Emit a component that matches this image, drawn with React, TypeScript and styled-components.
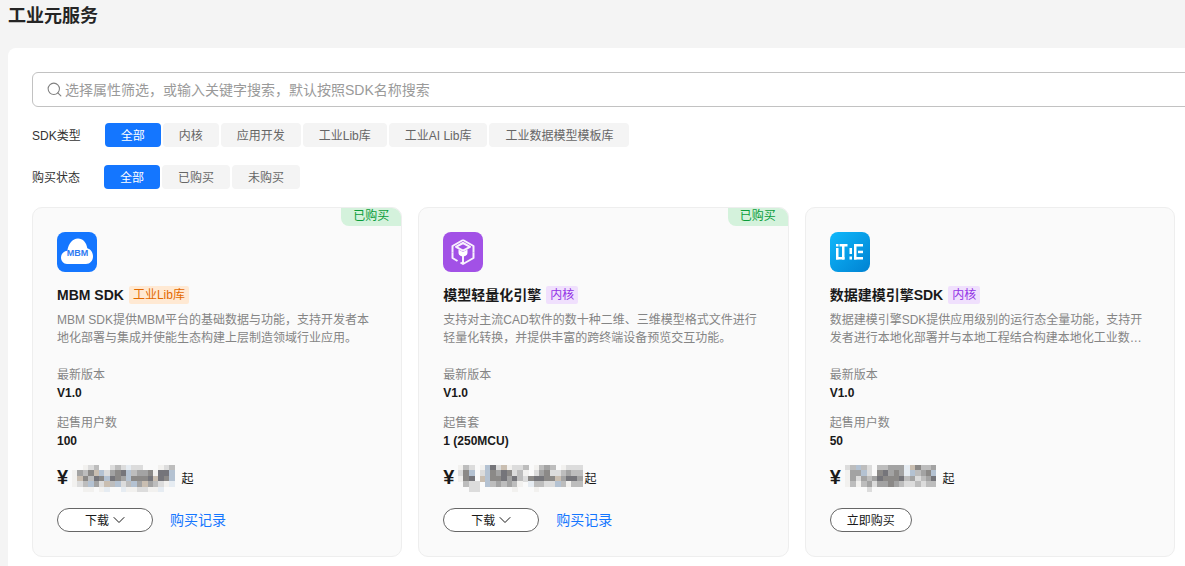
import { createGlobalStyle } from 'styled-components'
import styled from 'styled-components'
import { Search, ChevronDown } from 'lucide-react'

const GlobalStyle = createGlobalStyle`
  html, body {
    margin: 0;
    height: 100%;
    overflow: hidden;
    background: #f4f4f4;
  }
  body {
    font-family: "Liberation Sans", "Noto Sans CJK SC", sans-serif;
    font-size: 12px;
    color: #191919;
  }
`

const Page = styled.div`
  width: 1560px;
  padding: 0 8px;
`

const PageTitle = styled.h1`
  margin: 0;
  height: 48px;
  padding-top: 4px;
  box-sizing: border-box;
  font-size: 18px;
  line-height: 24px;
  font-weight: 700;
  color: #252525;
`

const Panel = styled.section`
  background: #fff;
  border-radius: 8px;
  padding: 24px;
  min-height: 600px;
`

const SearchBox = styled.div`
  display: flex;
  align-items: center;
  gap: 2px;
  height: 35px;
  box-sizing: border-box;
  padding: 0 13px;
  border: 1px solid #c2c2c2;
  border-radius: 6px;
  color: #808080;
`

const SearchInput = styled.input`
  flex: 1;
  border: 0;
  outline: 0;
  padding: 0;
  background: transparent;
  font: inherit;
  font-size: 14px;
  color: #191919;

  &::placeholder {
    color: #9a9a9a;
    opacity: 1;
  }
`

const FilterRow = styled.div`
  display: flex;
  align-items: center;
  margin-top: ${p => p.$top}px;
`

const FilterLabel = styled.span`
  margin-right: 24px;
  padding-top: 2px;
  font-size: 12px;
  line-height: 22px;
  color: #333;
`

const Tabs = styled.div`
  display: flex;
  gap: 2px;
`

const Tab = styled.button`
  height: 24px;
  padding: 0 16px 2px;
  border: 0;
  border-radius: 4px;
  font: inherit;
  font-size: 12px;
  white-space: nowrap;
  color: ${p => (p.$active ? '#fff' : '#666')};
  background: ${p => (p.$active ? '#1476ff' : '#f4f4f4')};
`

const CardGrid = styled.div`
  display: grid;
  grid-template-columns: repeat(3, 370.33px);
  gap: 16px;
  margin-top: 18px;
`

const Card = styled.article`
  position: relative;
  height: 350px;
  box-sizing: border-box;
  padding: 24px;
  background: #fafafa;
  border: 1px solid #eeeeee;
  border-radius: 10px;
  overflow: hidden;
`

const Ribbon = styled.span`
  position: absolute;
  top: -1px;
  right: 0;
  width: 60px;
  height: 19px;
  line-height: 19px;
  text-align: center;
  font-size: 12px;
  color: #0a9d3a;
  background: #d4f2dc;
  border-bottom-left-radius: 8px;
`

const LogoBox = styled.div`
  width: 40px;
  height: 40px;

  svg {
    display: block;
  }
`

const TitleRow = styled.div`
  display: flex;
  align-items: center;
  gap: 5px;
  height: 18px;
  margin-top: 14px;
`

const CardTitle = styled.h3`
  margin: 0;
  font-size: 14px;
  line-height: 18px;
  font-weight: 700;
  color: #191919;
`

const KindTag = styled.span`
  height: 18px;
  line-height: 18px;
  padding: 0 4px;
  border-radius: 2px;
  font-size: 12px;
  color: ${p => (p.$kind === 'lib' ? '#e36a00' : '#9333e6')};
  background: ${p => (p.$kind === 'lib' ? '#ffe9d3' : '#f0e0fd')};
`

const Desc = styled.p`
  margin: 7px 0 0;
  width: 320px;
  font-size: 12px;
  line-height: 18px;
  height: 36px;
  color: #858585;
  display: -webkit-box;
  -webkit-box-orient: vertical;
  -webkit-line-clamp: 2;
  overflow: hidden;
`

const MetaLabel = styled.div`
  margin-top: ${p => p.$top}px;
  font-size: 12px;
  line-height: 18px;
  color: #858585;
`

const MetaValue = styled.div`
  font-size: 12px;
  line-height: 18px;
  font-weight: 700;
  color: #191919;
`

const PriceRow = styled.div`
  display: flex;
  align-items: center;
  height: 26px;
  margin-top: 15px;
`

const Yen = styled.span`
  width: 15px;
  margin-bottom: 2px;
  font-size: 20px;
  font-weight: 700;
  color: #191919;
`

const Mosaic = styled.svg`
  display: block;
  margin-right: ${p => p.$gap}px;
`

const PriceFrom = styled.span`
  margin-bottom: 2px;
  font-size: 12px;
  color: #191919;
`

const Actions = styled.div`
  display: flex;
  align-items: center;
  gap: 17px;
  margin-top: 17px;
`

const OutlineButton = styled.button`
  display: flex;
  align-items: center;
  justify-content: center;
  gap: 4px;
  width: ${p => p.$width}px;
  height: 24px;
  padding: 0 0 2px;
  background: #fff;
  border: 1px solid #666;
  border-radius: 12px;
  font: inherit;
  font-size: 12px;
  color: #191919;
`

const Chevron = styled(ChevronDown)`
  margin: 2px -4px 0;
`

const RecordLink = styled.a`
  margin-bottom: 2px;
  font-size: 14px;
  color: #1476ff;
`

const palette = {
  a: '#f2f1ef',
  b: '#dcdcdc',
  c: '#bdbdbd',
  d: '#a3a3a3',
  e: '#8b8987',
  f: '#75757a',
  g: '#b4c2d2',
  h: '#c9beb1',
  i: '#e6ecf2',
}

const CELL = 5.4

function PriceMosaic({ rows, gap }: { rows: string[]; gap: number }) {
  const w = rows[0].length * CELL
  return (
    <Mosaic $gap={gap} width={w} height={rows.length * CELL} shapeRendering="crispEdges">
      {rows.map((row, y) =>
        row.split('').map((ch, x) =>
          palette[ch] ? (
            <rect key={`${x}-${y}`} x={x * CELL} y={y * CELL} width={CELL + 0.3} height={CELL + 0.3} fill={palette[ch]} />
          ) : null
        )
      )}
    </Mosaic>
  )
}

function MbmLogo() {
  return (
    <svg width="40" height="40" viewBox="0 0 40 40">
      <rect width="40" height="40" rx="8" fill="#1476ff" />
      <path
        d="M10 32C6.500 32 4 29 4 25.500 4 21.800 6.700 19 10.300 18.700 11.500 11.700 15.500 6.500 21 6.500c5 0 8.500 4 9.300 9.800C33.700 17.200 36 20.600 36 24.500 36 28.700 33 32 29 32z"
        fill="#fff"
      />
      <text x="20.500" y="24" textAnchor="middle" fontSize="9" fontWeight="700" fill="#2f7bf2" fontFamily="Liberation Sans, sans-serif">
        MBM
      </text>
    </svg>
  )
}

function CubeLogo() {
  return (
    <svg width="40" height="40" viewBox="0 0 40 40">
      <rect width="40" height="40" rx="8" fill="#a251e6" />
      <g fill="none" stroke="#fff" strokeOpacity="0.92" strokeWidth="2" strokeLinejoin="round">
        <path d="M20 8l10.500 6v6.500" />
        <path d="M20 8L9.500 14v6.500" />
        <path d="M13 14.800L20 11l7 3.800-7 3.800z" />
        <path d="M9.500 20.500v5.500l5 3" />
        <path d="M30.500 20.500v5.500L20 32l-2.500-1.500" />
        <path d="M20 20v11" />
      </g>
      <path d="M15.500 17.500L20 20l4.500-2.500v3c0 2.500-2 4-4.500 4s-4.500-1.500-4.500-4z" fill="#fff" />
    </svg>
  )
}

function UteLogo() {
  return (
    <svg width="40" height="40" viewBox="0 0 40 40">
      <defs>
        <linearGradient id="uteBg" x1="0" y1="0" x2="1" y2="1">
          <stop offset="0" stopColor="#0fb8fb" />
          <stop offset="1" stopColor="#0082d2" />
        </linearGradient>
      </defs>
      <rect width="40" height="40" rx="8" fill="url(#uteBg)" />
      <g fill="#fff">
        <rect x="6" y="12" width="2.500" height="2.500" />
        <rect x="6" y="16" width="2.500" height="11.500" />
        <rect x="6" y="25" width="8.500" height="2.500" />
        <rect x="12" y="12" width="2.500" height="15.500" />
        <rect x="9.500" y="12" width="8" height="2.500" />
        <rect x="19.500" y="16" width="2.500" height="6" />
        <rect x="19.500" y="24.500" width="2.500" height="3" />
        <rect x="24" y="12" width="9" height="2.500" />
        <rect x="24" y="12" width="2.500" height="15.500" />
        <rect x="28" y="18.700" width="5" height="2.500" />
        <rect x="24" y="25" width="9" height="2.500" />
      </g>
    </svg>
  )
}

const cards = [
  {
    logo: <MbmLogo />,
    title: 'MBM SDK',
    kind: 'lib',
    kindText: '工业Lib库',
    desc: 'MBM SDK提供MBM平台的基础数据与功能，支持开发者本地化部署与集成并使能生态构建上层制造领域行业应用。',
    unitLabel: '起售用户数',
    unit: '100',
    bought: true,
    mosaicGap: 7,
    mosaic: [
      '..abc..bcbibb...abc',
      'adcehgbdefgcddeaffg',
      'ahecfegfedgeeefhfeg',
      'abcgdbhcgbcgdhdcbai',
      '..aa.ai..iaabbaai..',
    ],
  },
  {
    logo: <CubeLogo />,
    title: '模型轻量化引擎',
    kind: 'core',
    kindText: '内核',
    desc: '支持对主流CAD软件的数十种二维、三维模型格式文件进行轻量化转换，并提供丰富的跨终端设备预览交互功能。',
    unitLabel: '起售套',
    unit: '1 (250MCU)',
    bought: true,
    mosaicGap: 2,
    mosaic: [
      'acb.agfbhabbc.acdc.abbb',
      'beg.bgedfebca.bdebbcdcc',
      'aef.hgeefdfcbeffeehdffd',
      '.cbb.gcdcdca.iccbbgcacc',
      '..bb......a...a........',
    ],
  },
  {
    logo: <UteLogo />,
    title: '数据建模引擎SDK',
    kind: 'core',
    kindText: '内核',
    desc: '数据建模引擎SDK提供应用级别的运行态全量功能，支持开发者进行本地化部署并与本地工程结合构建本地化工业数字化应用与服务。',
    unitLabel: '起售用户数',
    unit: '50',
    bought: false,
    mosaicGap: 6,
    mosaic: [
      'bcgcb.ccdddiheccd',
      'addgb.efdedigcdeg',
      'adbdcdfeeefcdbcdf',
      'acacdbddedcbbcbcc',
      '....b............',
    ],
  },
]

const sdkTypes = ['全部', '内核', '应用开发', '工业Lib库', '工业AI Lib库', '工业数据模型模板库']
const buyStates = ['全部', '已购买', '未购买']

export default function App() {
  return (
    <Page>
      <GlobalStyle />
      <PageTitle>工业元服务</PageTitle>
      <Panel>
        <SearchBox>
          <Search size={17} strokeWidth={1.5} />
          <SearchInput placeholder="选择属性筛选，或输入关键字搜索，默认按照SDK名称搜索" />
        </SearchBox>

        <FilterRow $top={16}>
          <FilterLabel>SDK类型</FilterLabel>
          <Tabs>
            {sdkTypes.map((t, i) => (
              <Tab key={t} $active={i === 0}>{t}</Tab>
            ))}
          </Tabs>
        </FilterRow>
        <FilterRow $top={18}>
          <FilterLabel>购买状态</FilterLabel>
          <Tabs>
            {buyStates.map((t, i) => (
              <Tab key={t} $active={i === 0}>{t}</Tab>
            ))}
          </Tabs>
        </FilterRow>

        <CardGrid>
          {cards.map(card => (
            <Card key={card.title}>
              {card.bought && <Ribbon>已购买</Ribbon>}
              <LogoBox>{card.logo}</LogoBox>
              <TitleRow>
                <CardTitle>{card.title}</CardTitle>
                <KindTag $kind={card.kind}>{card.kindText}</KindTag>
              </TitleRow>
              <Desc>{card.desc}</Desc>
              <MetaLabel $top={19}>最新版本</MetaLabel>
              <MetaValue>V1.0</MetaValue>
              <MetaLabel $top={12}>{card.unitLabel}</MetaLabel>
              <MetaValue>{card.unit}</MetaValue>
              <PriceRow>
                <Yen>¥</Yen>
                <PriceMosaic rows={card.mosaic} gap={card.mosaicGap} />
                <PriceFrom>起</PriceFrom>
              </PriceRow>
              <Actions>
                {card.bought ? (
                  <>
                    <OutlineButton $width={96}>
                      下载 <Chevron size={20} strokeWidth={1.2} />
                    </OutlineButton>
                    <RecordLink>购买记录</RecordLink>
                  </>
                ) : (
                  <OutlineButton $width={82}>立即购买</OutlineButton>
                )}
              </Actions>
            </Card>
          ))}
        </CardGrid>
      </Panel>
    </Page>
  )
}
